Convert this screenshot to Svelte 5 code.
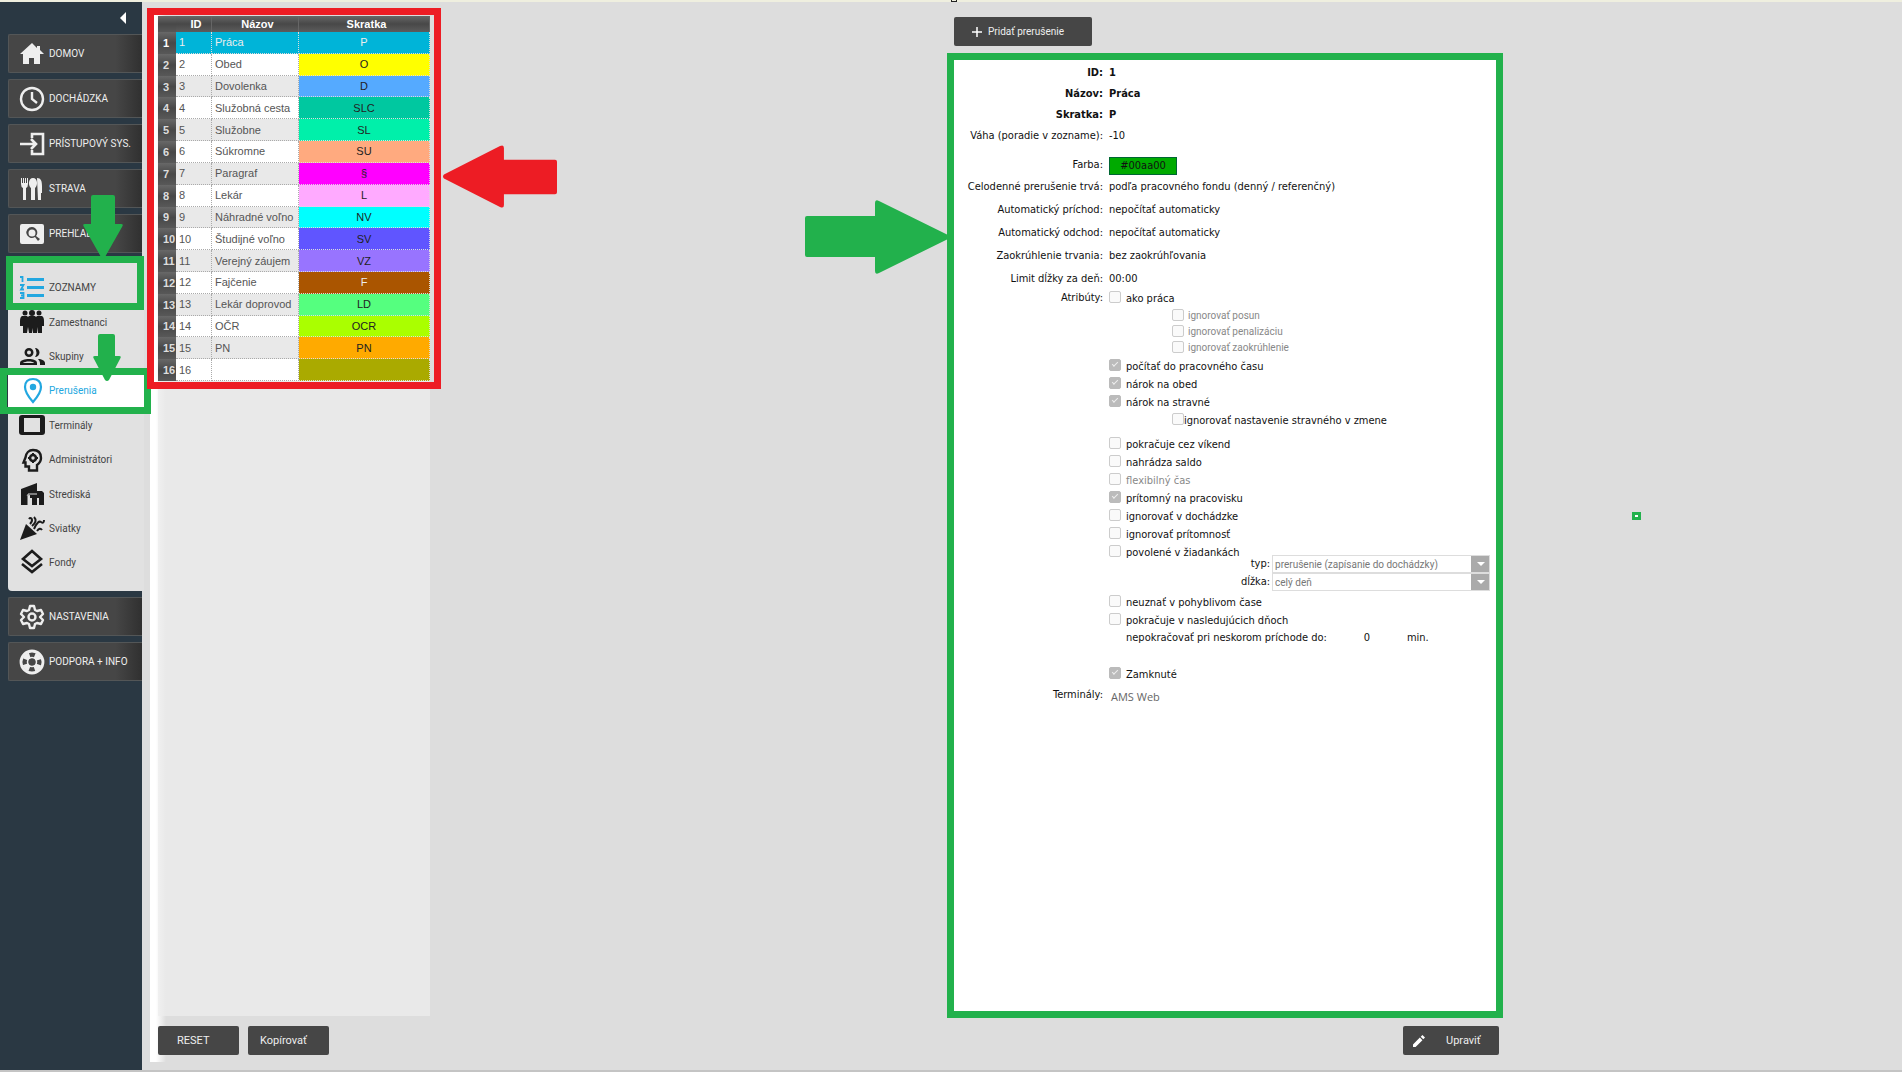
<script lang="ts">
	type Row = { id: number; name: string; code: string; color: string; light?: boolean };

	const mainMenu = [
		{ label: 'DOMOV', icon: 'home' },
		{ label: 'DOCHÁDZKA', icon: 'clock' },
		{ label: 'PRÍSTUPOVÝ SYS.', icon: 'login' },
		{ label: 'STRAVA', icon: 'food' },
		{ label: 'PREHĽADY', icon: 'search' }
	];

	const lists = [
		{ label: 'Zamestnanci', icon: 'people' },
		{ label: 'Skupiny', icon: 'group' },
		{ label: 'Prerušenia', icon: 'pin' },
		{ label: 'Terminály', icon: 'tablet' },
		{ label: 'Administrátori', icon: 'head' },
		{ label: 'Strediská', icon: 'building' },
		{ label: 'Sviatky', icon: 'party' },
		{ label: 'Fondy', icon: 'layers' }
	];

	const footMenu = [
		{ label: 'NASTAVENIA', icon: 'gear' },
		{ label: 'PODPORA + INFO', icon: 'support' }
	];

	const rows: Row[] = [
		{ id: 1, name: 'Práca', code: 'P', color: '#00b4d8', light: true },
		{ id: 2, name: 'Obed', code: 'O', color: '#ffff00' },
		{ id: 3, name: 'Dovolenka', code: 'D', color: '#55aaff' },
		{ id: 4, name: 'Služobná cesta', code: 'SLC', color: '#00c8a0' },
		{ id: 5, name: 'Služobne', code: 'SL', color: '#00f0aa' },
		{ id: 6, name: 'Súkromne', code: 'SU', color: '#ffaa7f' },
		{ id: 7, name: 'Paragraf', code: '§', color: '#ff00ff' },
		{ id: 8, name: 'Lekár', code: 'L', color: '#ffaaff' },
		{ id: 9, name: 'Náhradné voľno', code: 'NV', color: '#00ffff' },
		{ id: 10, name: 'Študijné voľno', code: 'SV', color: '#6055ff' },
		{ id: 11, name: 'Verejný záujem', code: 'VZ', color: '#9874ff' },
		{ id: 12, name: 'Fajčenie', code: 'F', color: '#aa5500', light: true },
		{ id: 13, name: 'Lekár doprovod', code: 'LD', color: '#55ff7f' },
		{ id: 14, name: 'OČR', code: 'OCR', color: '#aaff00' },
		{ id: 15, name: 'PN', code: 'PN', color: '#ffaa00' },
		{ id: 16, name: '', code: '', color: '#aaaa00' }
	];

	const basics = [
		['ID:', '1'],
		['Názov:', 'Práca'],
		['Skratka:', 'P']
	];

	const timing = [
		['Celodenné prerušenie trvá:', 'podľa pracovného fondu (denný / referenčný)'],
		['Automatický príchod:', 'nepočítať automaticky'],
		['Automatický odchod:', 'nepočítať automaticky'],
		['Zaokrúhlenie trvania:', 'bez zaokrúhľovania'],
		['Limit dĺžky za deň:', '00:00']
	];
</script>

{#snippet icon(name: string)}
	<svg class="icon" viewBox="0 0 24 24" fill="currentColor" aria-hidden="true">
		{#if name === 'home'}
			<path d="M12 1 0 12h3v10h6v-6h5v6h6V12h4L20 8V4h-3v2z" />
		{:else if name === 'clock'}
			<circle cx="12" cy="12" r="11" fill="none" stroke="currentColor" stroke-width="2.400" />
			<path d="M12 5v7l5 4" fill="none" stroke="currentColor" stroke-width="2.400" />
		{:else if name === 'login'}
			<path d="M12 6V2h11v20H12v-4M0 12h16M11 7l5 5-5 5" fill="none" stroke="currentColor" stroke-width="2.6" />
		{:else if name === 'food'}
			<path d="M1 1h1v5h1V1h1v5h1V1h1v5h1V1h1v6q0 3-2 4v12H3V11q-2-1-2-4zM13 1c5 0 5 8 2 10v12h-4V11c-3-2-3-10 2-10zM17 1c4 0 5 3 5 8v7h-1v7h-3z" />
		{:else if name === 'search'}
			<path fill-rule="evenodd" d="M2 2h20q2 0 2 2v16q0 2-2 2H2q-2 0-2-2V4q0-2 2-2zm10 3a5.500 5.500 0 1 0 3 10l3 4 2-2-4-3a5.500 5.500 0 0 0-4-9zm0 2.500a3.500 3.500 0 1 1 0 7 3.500 3.500 0 0 1 0-7z" />
		{:else if name === 'list'}
			<path d="M7 2h17v3H7zM7 10h17v3H7zM7 18h17v3H7z" />
			<path d="M0 1h2.500v5M0 9h3.500L1 13.500h3M0 17h3.500v5H0M1 19.500h2" fill="none" stroke="currentColor" stroke-width="1.800" />
		{:else if name === 'people'}
			<circle cx="5" cy="3" r="2.500" /><circle cx="12" cy="3" r="3" /><circle cx="19" cy="3" r="2.500" />
			<path d="M2 6h5l1 1 1-1h6l1 1 1-1h5q2 1 2 5v5h-2v7h-4v-6l-1 6h-4v-5l-1 5H9l-1-6-1 6H3v-7H0v-5q0-4 2-5z" />
		{:else if name === 'group'}
			<path fill-rule="evenodd" d="M9 3a4.500 4.500 0 1 1 0 9 4.500 4.500 0 0 1 0-9zm0 2.500a2 2 0 1 0 0 4 2 2 0 0 0 0-4zM0 20v-2c0-3 5-4 9-4s8 1 8 4v2zm3-2h11c-1-2-9-2-11 0zM15 3a4.500 4.500 0 1 1 0 9q3-4 0-9zM18 14c4 0 7 2 7 4v2h-5v-2q0-2-2-4z" />
		{:else if name === 'pin'}
			<path d="M13 0c-5 0-8 3-8 8 0 6 8 15 8 15s8-9 8-15c0-5-3-8-8-8z" fill="none" stroke="currentColor" stroke-width="2.200" />
			<circle cx="13" cy="8" r="3.200" />
		{:else if name === 'tablet'}
			<path fill-rule="evenodd" d="M2 2h20q3 0 3 3v14q0 3-3 3H2q-3 0-3-3V5q0-3 3-3zm2 3v14h16V5z" />
		{:else if name === 'head'}
			<path d="M9 22.500v-4H5.500v-4H3.500l2-5C6 5 9 2 13 2c5 0 8 3 8 8 0 3-1 5-4 7v5.500z" fill="none" stroke="currentColor" stroke-width="2.400" />
			<circle cx="13" cy="10" r="3" fill="none" stroke="currentColor" stroke-width="2.600" />
			<path d="M12 5h2v3h-2zM12 12h2v3h-2zM8 9h3v2H8zM15 9h3v2h-3z" />
		{:else if name === 'building'}
			<path d="M1 7 17 1v8h5l2 2v12h-5v-7h-2v7h-5v-7h-2v-3l-4 1v9H1z" />
			<path d="M6 23V14h2v9z" />
			<path d="M8 23V12h9" fill="none" stroke="#e1e1e1" />
		{:else if name === 'party'}
			<path d="M6 8 0 24l17-6z" />
			<path d="M9 3c2-3 5 1 1 5M14 1q4 4-2 9M14 13q4-9 7-7t3-2M17 15q3-4 5-1" fill="none" stroke="currentColor" stroke-width="2" />
		{:else if name === 'layers'}
			<path d="M12 0 3 8l9 7 9-7z" fill="none" stroke="currentColor" stroke-width="2.600" />
			<path d="m2 13 10 8 10-8" fill="none" stroke="currentColor" stroke-width="2.600" />
		{:else if name === 'gear'}
			<path d="M10 1h4l1 4 2 1 4-1 2 4-3 3 3 3-2 4-4-1-2 1-1 4h-4l-1-4-2-1-4 1-2-4 3-3-3-3 2-4 4 1 2-1z" fill="none" stroke="currentColor" stroke-width="2.400" stroke-linejoin="round" />
			<circle cx="12" cy="12" r="3.500" fill="none" stroke="currentColor" stroke-width="2.400" />
		{:else if name === 'support'}
			<circle cx="12" cy="12" r="11" fill="none" stroke="currentColor" stroke-width="2.800" />
			<circle cx="12" cy="12" r="7" fill="none" stroke="currentColor" stroke-width="6" stroke-dasharray="6 5" stroke-dashoffset="-2.500" />
			<circle cx="12" cy="12" r="4.500" fill="none" stroke="currentColor" stroke-width="1.500" />
		{/if}
	</svg>
{/snippet}

{#snippet check(label: string, checked = false, kind = '')}
	<label class="check {kind}">
		<input type="checkbox" {checked} disabled />
		<span>{label}</span>
	</label>
{/snippet}

<div class="app">
	<nav class="sidebar">
		<button class="collapse" aria-label="Zbaliť menu">
			<svg viewBox="0 0 6 12"><path d="M6 0v12L0 6z" fill="#fff" /></svg>
		</button>
		{#each mainMenu as item}
			<button class="item">{@render icon(item.icon)}{item.label}</button>
		{/each}
		<div class="submenu">
			<button class="head">{@render icon('list')}<span>ZOZNAMY</span></button>
			<ul>
				{#each lists as item}
					<li>
						<a href="#{item.icon}" class:active={item.icon === 'pin'}>{@render icon(item.icon)}{item.label}</a>
					</li>
				{/each}
			</ul>
			<div class="frame frame-head"></div>
			<div class="frame frame-active"></div>
			<svg class="arrow arrow-head" viewBox="0 0 40 64"><path d="M10 0h20q2 0 2 2v27h6q3 0 1 3L22 62q-2 3-4 0L1 32q-2-3 1-3h6V2q0-2 2-2z" /></svg>
			<svg class="arrow arrow-active" viewBox="0 0 28 48"><path d="M7 0h13q2 0 2 2v20h4q3 0 1 3L16 46q-2 2-4 0L1 25q-2-3 1-3h3V2q0-2 2-2z" /></svg>
		</div>
		{#each footMenu as item}
			<button class="item">{@render icon(item.icon)}{item.label}</button>
		{/each}
	</nav>

	<section class="list-pane">
		<div class="grid-box">
			<table>
				<thead>
					<tr><th class="num"></th><th class="id">ID</th><th class="name">Názov</th><th>Skratka</th></tr>
				</thead>
				<tbody>
					{#each rows as row}
						<tr class:selected={row.id === 1}>
							<th class="num">{row.id}</th>
							<td>{row.id}</td>
							<td>{row.name}</td>
							<td class="code" class:light={row.light} style="background-color: {row.color}">{row.code}</td>
						</tr>
					{/each}
				</tbody>
			</table>
			<div class="frame frame-table"></div>
			<svg class="arrow arrow-table" viewBox="0 0 116 64"><path d="M1 30 58 1q4-2 4 2v12h52q2 0 2 2v31q0 2-2 2H62v11q0 4-4 2L1 34q-2-2 0-4z" /></svg>
		</div>
		<div class="actions">
			<button class="btn">RESET</button>
			<button class="btn">Kopírovať</button>
		</div>
	</section>

	<section class="detail-pane">
		<button class="btn add">
			<svg viewBox="0 0 10 10"><path d="M5 0v10M0 5h10" stroke="#fff" stroke-width="1.500" /></svg>
			Pridať prerušenie
		</button>
		<div class="detail">
			<dl>
				{#each basics as [label, value]}
					<dt class="strong">{label}</dt>
					<dd class="strong">{value}</dd>
				{/each}
				<dt>Váha (poradie v zozname):</dt>
				<dd>-10</dd>
			</dl>
			<dl class="color">
				<dt>Farba:</dt>
				<dd><span class="swatch">#00aa00</span></dd>
			</dl>
			<dl class="timing">
				{#each timing as [label, value]}
					<dt>{label}</dt>
					<dd>{value}</dd>
				{/each}
			</dl>
			<dl class="attributes">
				<dt>Atribúty:</dt>
				<dd>
					{@render check('ako práca')}
					<div class="nested">
						{@render check('ignorovať posun', false, 'small')}
						{@render check('ignorovať penalizáciu', false, 'small')}
						{@render check('ignorovať zaokrúhlenie', false, 'small')}
					</div>
					{@render check('počítať do pracovného času', true)}
					{@render check('nárok na obed', true)}
					{@render check('nárok na stravné', true)}
					<div class="nested last">
						{@render check('ignorovať nastavenie stravného v zmene', false, 'tight')}
					</div>
					{@render check('pokračuje cez víkend')}
					{@render check('nahrádza saldo')}
					{@render check('flexibilný čas', false, 'muted')}
					{@render check('prítomný na pracovisku', true)}
					{@render check('ignorovať v dochádzke')}
					{@render check('ignorovať prítomnosť')}
					<div class="requests">
						{@render check('povolené v žiadankách')}
						<div class="selects">
							<label for="kind">typ:</label>
							<div class="select">
								<select id="kind" disabled><option>prerušenie (zapísanie do dochádzky)</option></select>
							</div>
							<label for="length">dĺžka:</label>
							<div class="select">
								<select id="length" disabled><option>celý deň</option></select>
							</div>
						</div>
					</div>
					{@render check('neuznať v pohyblivom čase')}
					{@render check('pokračuje v nasledujúcich dňoch')}
					<div class="late">
						<span>nepokračovať pri neskorom príchode do:</span>
						<span class="amount">0</span>
						<span>min.</span>
					</div>
					{@render check('Zamknuté', true)}
				</dd>
				<dt>Terminály:</dt>
				<dd class="terminals">AMS Web</dd>
			</dl>
			<svg class="arrow arrow-detail" viewBox="0 0 144 74"><path d="M2 16h68V3q0-4 4-2l69 34q2 2 0 4L74 73q-4 2-4-2V57H2q-2 0-2-2V18q0-2 2-2z" /></svg>
		</div>
		<div class="actions end">
			<button class="btn edit">
				<svg viewBox="0 0 14 14"><path d="M0 14v-3l8-8 3 3-8 8zM9 2l2-2 3 3-2 2z" fill="#fff" /></svg>
				Upraviť
			</button>
		</div>
	</section>
	<div class="marker"></div>
	<div class="handle"></div>
</div>

<style>
	:global(body) {
		background: #ddd;
	}

	.app {
		position: relative;
		display: grid;
		grid-template-columns: 142px calc(50vw - 142px) 1fr;
		min-height: 100vh;
		box-sizing: border-box;
		border-top: 2px solid #efefdf;
		border-bottom: 2px solid #c4c4c4;
		font-family: "DejaVu Sans Condensed", "DejaVu Sans", sans-serif;
		font-size: 11px;
		color: #111;
	}

	button {
		font: inherit;
		border: 0;
		cursor: pointer;
	}

	.sidebar {
		display: flex;
		flex-direction: column;
		gap: 6px;
		padding-left: 8px;
		background: #2a3843;
		font-family: Roboto, sans-serif;
		font-size: 10px;
	}

	.collapse {
		align-self: flex-end;
		height: 26px;
		margin-right: 16px;
		padding: 10px 0 4px;
		background: none;
	}

	.collapse svg {
		display: block;
		width: 6px;
		height: 12px;
	}

	.item {
		display: flex;
		align-items: center;
		gap: 5px;
		height: 39px;
		padding: 0 0 0 11px;
		box-sizing: border-box;
		border: 1px solid #535657;
		border-right: 0;
		border-radius: 2px 0 0 2px;
		background: linear-gradient(to right, #464646 80%, #303030);
		color: #eee;
		white-space: nowrap;
	}

	.icon {
		flex: none;
		width: 24px;
		height: 24px;
		overflow: visible;
	}

	.submenu {
		position: relative;
		z-index: 1;
		width: 136px;
		padding-bottom: 11px;
		border-radius: 0 0 0 4px;
		background: #e1e1e1;
		color: #444;
	}

	.head,
	.submenu a {
		display: flex;
		align-items: center;
		gap: 5px;
		width: 100%;
		height: 100%;
		padding: 0 0 0 12px;
		box-sizing: border-box;
		background: none;
		color: #444;
		text-decoration: none;
	}

	.submenu .head {
		height: 46px;
		padding-top: 11px;
	}

	.head .icon {
		color: #22a7e0;
	}

	ul {
		display: flex;
		flex-direction: column;
		height: 275px;
		margin: 0;
		padding: 0;
		list-style: none;
	}

	li {
		flex: 1;
	}

	.submenu a .icon {
		color: #1c1c1c;
	}

	.submenu a.active,
	.submenu a.active .icon {
		background: #fff;
		color: #22a7e0;
	}

	.frame {
		position: absolute;
		border: 7px solid #22b14c;
		pointer-events: none;
	}

	.frame-head {
		inset: -3px 0 auto -2px;
		height: 40px;
	}

	.frame-active {
		inset: 109px -7px auto -8px;
		height: 32px;
	}

	.frame-table {
		inset: -8px -11px -8px -11px;
		z-index: 2;
		border-color: #ed1c24;
	}

	.arrow {
		position: absolute;
		fill: #22b14c;
		pointer-events: none;
	}

	.arrow-head {
		top: -64px;
		left: 75px;
		width: 40px;
		height: 64px;
	}

	.arrow-active {
		top: 75px;
		left: 85px;
		width: 28px;
		height: 48px;
	}

	.arrow-table {
		top: 129px;
		left: calc(100% + 13px);
		width: 114px;
		height: 63px;
		fill: #ed1c24;
	}

	.arrow-detail {
		top: 140px;
		right: calc(100% + 5px);
		width: 144px;
		height: 74px;
	}

	.list-pane {
		position: relative;
		display: flex;
		flex-direction: column;
		align-items: flex-start;
		margin: 12px 0 8px 8px;
		padding-left: 8px;
		background: linear-gradient(to right, #fff 6px, #ddd 16px);
	}

	.grid-box {
		position: relative;
		width: 272px;
		margin-top: 2px;
	}

	.list-pane::before {
		content: "";
		position: absolute;
		inset: 2px auto 46px 8px;
		width: 272px;
		background: linear-gradient(to right, #f0f0f0, #e9e9e9 8px);
	}

	table {
		width: 100%;
		height: 365px;
		border-collapse: separate;
		border-spacing: 0;
		table-layout: fixed;
		font-family: "Liberation Sans", Arial, sans-serif;
		font-size: 11px;
		line-height: 14px;
		color: #555;
	}

	th {
		padding: 0;
		color: #fff;
	}

	thead th {
		height: 16px;
		padding-left: 5px;
		border-right: 1px solid #666;
		box-sizing: border-box;
		background: linear-gradient(#666, #484848 50%, #5c5c5c);
	}

	th.num {
		width: 18px;
		box-sizing: border-box;
		padding-left: 5px;
		border: 0;
		background: linear-gradient(#686868, #484848 50%, #585858);
		color: #ddd;
		text-align: left;
	}

	th.id {
		width: 36px;
	}

	th.name {
		width: 87px;
	}

	td {
		padding: 0 3px;
		border-right: 1px dotted #aaa;
		border-bottom: 1px dotted #aaa;
		background-color: #fff;
		white-space: nowrap;
	}

	tbody tr:nth-child(odd) td {
		background-color: #e9e9e9;
	}

	.code {
		border-color: #ddd;
		color: #222;
		text-align: center;
	}

	.light {
		color: #eee;
	}

	tbody tr.selected td {
		background-color: #00b4d8;
		border-color: #ddd;
		color: #eee;
	}

	tr.selected .num {
		color: #fff;
	}

	.actions {
		position: relative;
		display: flex;
		gap: 9px;
		margin-top: auto;
		padding-bottom: 7px;
	}

	.actions.end {
		justify-content: flex-end;
		margin-top: 15px;
		margin-right: -3px;
	}

	.btn {
		display: flex;
		align-items: center;
		width: 81px;
		height: 29px;
		padding: 0 12px 0 19px;
		border-radius: 2px;
		background: #464646;
		color: #eee;
		font-family: Roboto, sans-serif;
		white-space: nowrap;
	}

	.actions .btn + .btn {
		padding-left: 12px;
	}

	.btn.add {
		gap: 6px;
		width: 138px;
		padding-left: 18px;
		font-size: 10px;
	}

	.btn.edit {
		gap: 21px;
		width: 96px;
		padding-left: 10px;
	}

	.btn svg {
		flex: none;
		width: 10px;
		height: 10px;
	}

	.btn.edit svg {
		width: 12px;
		height: 12px;
	}

	.detail-pane {
		position: relative;
		display: flex;
		flex-direction: column;
		width: 57%;
		padding: 15px 0 8px 3px;
	}

	.detail {
		position: relative;
		flex: 1;
		margin-top: 14px;
		padding-top: 5px;
		outline: 7px solid #22b14c;
		background: #fff;
	}

	dl {
		display: grid;
		grid-template-columns: 149px 1fr;
		gap: 5px 6px;
		margin: 0;
		line-height: 16px;
	}

	dt {
		text-align: right;
		white-space: nowrap;
	}

	dd {
		margin: 0;
	}

	.strong {
		font-weight: bold;
	}

	.color {
		margin: 13px 0 4px;
	}

	.swatch {
		display: block;
		width: 66px;
		border: 1px solid #063;
		background: #0a0;
		text-align: center;
	}

	.timing {
		row-gap: 7px;
	}

	.attributes {
		margin-top: 3px;
		row-gap: 3px;
	}

	.check {
		display: flex;
		align-items: center;
		gap: 5px;
		height: 18px;
		white-space: nowrap;
	}

	.check input {
		appearance: none;
		flex: none;
		width: 12px;
		height: 12px;
		box-sizing: border-box;
		margin: 0 0 4px;
		border: 1px solid #ccc;
		border-radius: 2px;
		background: #fafafa;
	}

	.check input:checked {
		border-color: #bbb;
		background: #bbb;
	}

	.check input:checked::after {
		content: "";
		display: block;
		width: 5px;
		height: 2px;
		margin: 2px;
		border: solid #eee;
		border-width: 0 0 1px 1px;
		rotate: -45deg;
	}

	.nested {
		padding: 0 0 2px 63px;
	}

	.nested.last {
		padding-bottom: 6px;
	}

	.check.small {
		height: 16px;
		gap: 4px;
		font-family: Roboto, sans-serif;
		font-size: 10px;
	}

	.small input {
		margin-bottom: 2px;
	}

	.small,
	.muted {
		color: #888;
	}

	.check.tight {
		gap: 0;
	}

	.requests {
		display: flex;
		gap: 6px;
		margin-bottom: 3px;
	}

	.selects {
		display: grid;
		grid-template-columns: 1fr 218px;
		gap: 0 2px;
		flex: 1;
		box-sizing: border-box;
		min-width: 0;
		padding: 11px 0 0;
		margin-right: 6px;
		line-height: 18px;
		text-align: right;
	}

	.selects label {
		min-width: 0;
	}

	.select {
		position: relative;
		height: 18px;
	}

	.select::after {
		content: "";
		position: absolute;
		top: 7px;
		right: 5px;
		border: 4px solid transparent;
		border-top-color: #fff;
	}

	select {
		appearance: none;
		display: block;
		width: 100%;
		height: 100%;
		box-sizing: border-box;
		margin: 0;
		padding: 0 20px 0 2px;
		border: 1px solid #ddd;
		border-radius: 0;
		background: linear-gradient(to left, #aaa 18px, #fff 18px);
		color: #777;
		font-family: Roboto, sans-serif;
		font-size: 10px;
		opacity: 1;
	}

	.requests > .check {
		width: 118px;
		margin-right: -6px;
	}

	.late {
		display: flex;
		height: 18px;
		margin-bottom: 18px;
		padding-left: 17px;
	}

	.amount {
		width: 80px;
		text-align: center;
	}

	.terminals {
		padding: 2px 0 0 2px;
		color: #666;
		font-family: "Open Sans", sans-serif;
	}

	.marker {
		position: absolute;
		top: 48%;
		left: 86%;
		width: 3px;
		height: 2px;
		margin: -3px 0 0 -4px;
		border: 3px solid #22b14c;
		background: #fff;
	}

	.handle {
		position: absolute;
		top: -5px;
		left: 50%;
		width: 4px;
		height: 3px;
		border: 1px solid #222;
	}
</style>
